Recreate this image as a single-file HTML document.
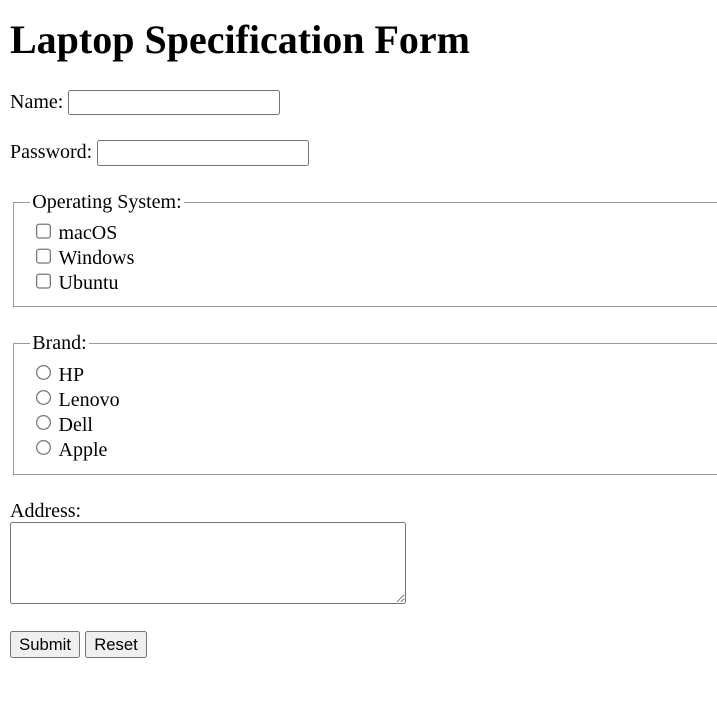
<!DOCTYPE html>
<html><head><meta charset="utf-8"><style>
html{zoom:1.25;}
body{margin:8px;font-family:"Liberation Serif",serif;font-size:16px;overflow:hidden;background:#fff;color:#000;}
h1{font-size:32px;margin:13px 0 21px;}
p{margin:20px 0;}
p.first{margin-top:16px;}
input[type=text],input[type=password]{font-family:"Liberation Sans",sans-serif;font-size:13.33px;width:164px;height:17px;border:1px solid #767676;border-radius:2px;padding:1px 2px;}
fieldset{margin:20px 2px 20px 2px;width:600px;border:1px solid #999;padding:6.4px 12px 6.8px 18px;}
fieldset.b{padding-top:7.2px;padding-bottom:8.4px;}
legend{padding:0 2px;margin-left:-5px}
.row{height:20px;}
.row input{margin:1px 5px 0 0;vertical-align:top;}
textarea{width:311px;height:60px;border:1px solid #767676;border-radius:2px;display:block;resize:both;margin-top:-1px;}
p.btns{margin-top:22px;}
button{font-family:"Liberation Sans",sans-serif;font-size:13.33px;padding:2px 6.5px;border:1px solid #767676;border-radius:2px;background:#efefef;margin-right:0;}
</style></head><body>
<h1>Laptop Specification Form</h1>
<p class="first">Name: <input type="text"></p>
<p>Password: <input type="password"></p>
<fieldset><legend>Operating System:</legend>
<div class="row"><input type="checkbox">macOS</div>
<div class="row"><input type="checkbox">Windows</div>
<div class="row"><input type="checkbox">Ubuntu</div>
</fieldset>
<fieldset class="b"><legend>Brand:</legend>
<div class="row"><input type="radio" name="b">HP</div>
<div class="row"><input type="radio" name="b">Lenovo</div>
<div class="row"><input type="radio" name="b">Dell</div>
<div class="row"><input type="radio" name="b">Apple</div>
</fieldset>
<div>Address:</div>
<textarea></textarea>
<p class="btns"><button>Submit</button> <button>Reset</button></p>
</body></html>
